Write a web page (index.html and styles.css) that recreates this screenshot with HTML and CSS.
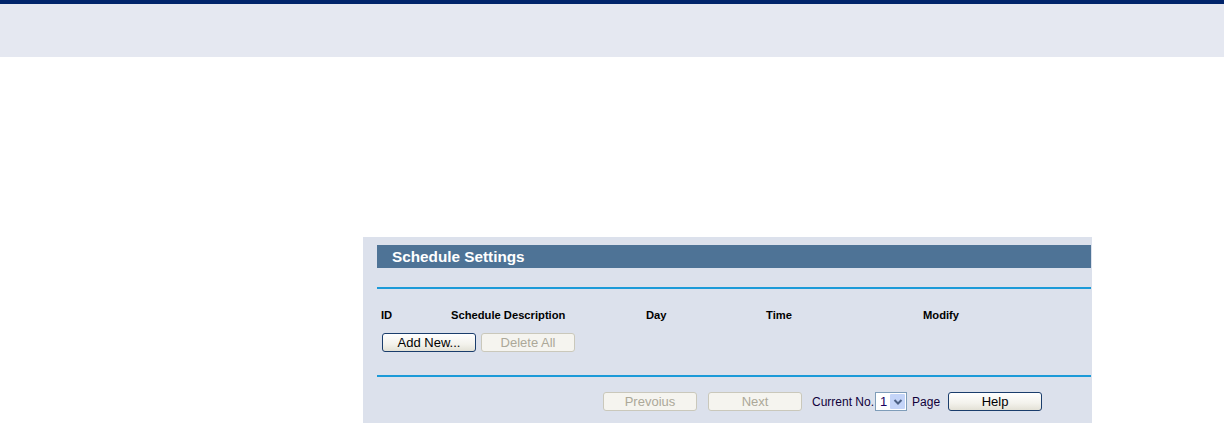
FILE: index.html
```html
<!DOCTYPE html>
<html>
<head>
<meta charset="utf-8">
<link rel="stylesheet" href="styles.css">
</head>
<body>
<div class="topbar"></div>
<div class="subbar"></div>
<div class="panel">
  <div class="title">Schedule Settings</div>
  <div class="rule rule-top"></div>
  <div class="cols">
    <span>ID</span>
    <span>Schedule Description</span>
    <span>Day</span>
    <span>Time</span>
    <span>Modify</span>
  </div>
  <div class="actions">
    <button class="btn">Add New...</button>
    <button class="btn" disabled>Delete All</button>
  </div>
  <div class="rule rule-bottom"></div>
  <div class="pager">
    <button class="btn" disabled>Prevoius</button>
    <button class="btn btn-next" disabled>Next</button>
    <span class="label">Current No.</span>
    <div class="select">
      <span class="select-val">1</span>
      <span class="select-arrow">
        <svg width="10" height="8" viewBox="0 0 10 8"><path d="M1.5 2 L5 5.5 L8.5 2" fill="none" stroke="#4d6185" stroke-width="2"/></svg>
      </span>
    </div>
    <span class="label label-page">Page</span>
    <button class="btn btn-help">Help</button>
  </div>
</div>
</body>
</html>
```

FILE: styles.css
```css
html, body {
  margin: 0;
  padding: 0;
  background: #ffffff;
  font-family: "Liberation Sans", Arial, sans-serif;
}

.topbar {
  height: 4px;
  background: #00246b;
}

.subbar {
  height: 53px;
  background: #e5e8f1;
}

.panel {
  margin: 180px 0 0 363px;
  width: 729px;
  box-sizing: border-box;
  background: #dce1ec;
  padding: 8px 1px 20px 14px;
}

.title {
  height: 23px;
  background: #4e7396;
  color: #ffffff;
  font-weight: bold;
  font-size: 15.3px;
  line-height: 23px;
  padding-left: 15px;
}

.rule {
  border-top: 2px solid #1b9ad8;
}

.rule-top {
  margin-top: 19px;
}

.cols {
  display: grid;
  grid-template-columns: 70px 195px 120px 157px 1fr;
  margin-top: 19px;
  padding-left: 4px;
  font-size: 11.2px;
  font-weight: bold;
  line-height: 14px;
  color: #000;
}

.actions {
  display: flex;
  gap: 5px;
  margin-top: 11px;
  padding-left: 5px;
}

.btn {
  width: 94px;
  height: 19px;
  box-sizing: border-box;
  margin: 0;
  padding: 0;
  border: 1px solid #1a3d6c;
  border-radius: 3px;
  background: linear-gradient(#ffffff, #f3f2ec 60%, #e3e1d6);
  font-family: "Liberation Sans", Arial, sans-serif;
  font-size: 13px;
  line-height: 17px;
  color: #000;
}

.btn:disabled {
  border-color: #cac8bb;
  background: #f5f4ef;
  color: #aca899;
}

.rule-bottom {
  margin-top: 23px;
}

.pager {
  display: flex;
  align-items: center;
  margin-top: 15px;
  padding-left: 226px;
  height: 19px;
}

.btn-next {
  margin-left: 11px;
}

.label {
  font-size: 12px;
  color: #10003a;
  margin-left: 10px;
}

.label-page {
  margin-left: 5px;
}

.select {
  display: flex;
  width: 32px;
  height: 19px;
  box-sizing: border-box;
  margin-left: 1px;
  border: 1px solid #7f9db9;
  background: #ffffff;
}

.select-val {
  flex: 1;
  font-size: 13px;
  line-height: 17px;
  padding-left: 4px;
  color: #1a0060;
}

.select-arrow {
  width: 15px;
  margin: 1px;
  background: #c4d4f8;
  border-radius: 1px;
  display: flex;
  align-items: center;
  justify-content: center;
}

.btn-help {
  margin-left: 8px;
}
```
